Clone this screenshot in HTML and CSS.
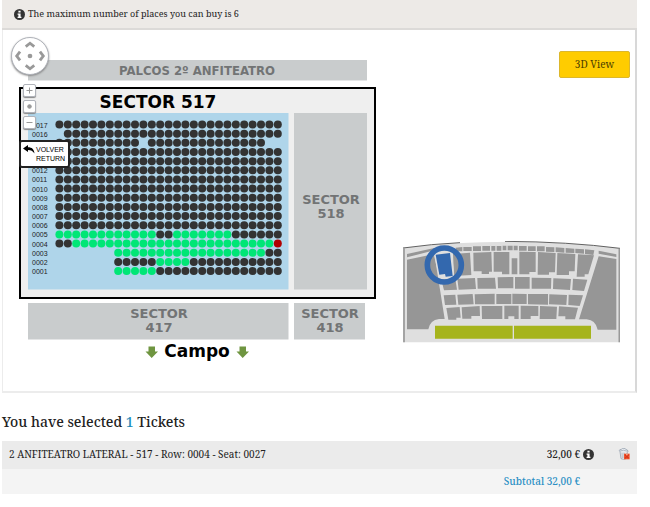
FILE: index.html
```html
<!DOCTYPE html>
<html lang="en">
<head>
<meta charset="utf-8">
<title>Seat selection</title>
<link rel="stylesheet" href="styles.css">
</head>
<body>
<svg class="defs" aria-hidden="true">
  <symbol id="info" viewBox="0 0 20 20">
    <circle cx="10" cy="10" r="10" fill="#333"/>
    <path d="M8 3h4v3.500H8zM6.500 8H12v6h1.500v2.500h-7V14H8v-3.500H6.500z" fill="#fff"/>
  </symbol>
</svg>
<main class="page">
  <p class="notice"><svg class="info-icon"><use href="#info"/></svg>The maximum number of places you can buy is 6</p>

  <section class="panel" aria-label="Seat map">
    <div class="map">
      <svg class="map-drawing" viewBox="3 30 375 361">
        <rect class="block" x="28" y="60" width="339" height="20.500"/>
        <text class="stand-name" x="197" y="75">PALCOS 2º ANFITEATRO</text>
        <rect class="sector" x="20" y="88" width="355" height="210"/>
        <text class="sector-name" x="158" y="108">SECTOR 517</text>
        <rect class="seating" x="28" y="113" width="260.500" height="176.500"/>
        <rect class="block" x="294" y="113" width="73" height="176.500"/>
        <text class="block-name" y="204"><tspan x="331">SECTOR</tspan><tspan x="331" dy="14">518</tspan></text>
        <rect class="block" x="28" y="303" width="260.500" height="36.500"/>
        <text class="block-name" y="318"><tspan x="159">SECTOR</tspan><tspan x="159" dy="14">417</tspan></text>
        <rect class="block" x="294" y="303" width="71" height="36.500"/>
        <text class="block-name" y="318"><tspan x="330">SECTOR</tspan><tspan x="330" dy="14">418</tspan></text>
        <text class="sector-name" x="197" y="357">Campo</text>
        <path class="arrow" d="M148.500 346.500h6.500v5h3l-6.300 6.500-6.200-6.500h3zM239.500 346.500h6.500v5h3l-6.300 6.500-6.200-6.500h3z"/>
        <g id="seats"></g>
      </svg>
      <div class="pan">
        <svg class="pan-face" viewBox="0 0 38 38" aria-hidden="true">
          <path d="M14.500 9l4.500-3.500L23.500 9M14.500 29l4.500 3.500 4.500-3.500M8.500 14.500L5 19l3.500 4.500M29.500 14.500L33 19l-3.500 4.500" fill="none" stroke="#999" stroke-width="3"/>
          <circle cx="19" cy="19" r="2.500" fill="#999"/>
        </svg>
      </div>
      <div class="zoom">
        <button class="zoom-button" aria-label="Zoom in"><svg viewBox="0 0 11 11"><path d="M5.500 2.500v6M2.500 5.500h6"/></svg></button>
        <button class="zoom-button" aria-label="Reset zoom"><svg viewBox="0 0 11 11"><circle cx="5.500" cy="5.500" r="1.800"/></svg></button>
        <button class="zoom-button" aria-label="Zoom out"><svg viewBox="0 0 11 11"><path d="M2.500 5.500h6"/></svg></button>
      </div>
      <button class="return">
        <svg class="return-icon" viewBox="0 0 12 10"><path d="M0 3.500L5 0v2.200c4 0 6 2 6.500 6.300C9.800 6 8 5 5 5v2z"/></svg>
        <span>VOLVER<br>RETURN</span>
      </button>
    </div>

    <div class="side">
      <button class="view-button">3D View</button>
      <svg class="overview" viewBox="24 18 651 306" role="img" aria-label="Stadium overview">
        <path d="M24 38Q180 20 350 20T675 40V322H24z" fill="#dfdfdf"/>
        <path d="M24 39Q110 27 195 23M330 19Q520 20 675 40" fill="none" stroke="#444" stroke-width="2.500"/>
        <path d="M27 40V322M673 41V322" fill="none" stroke="#999" stroke-width="5"/>
        <g fill="#969696">
          <path d="M36 57L118 39V46L36 67zM36 74L118 57 149 252H132Q105 255 100 283H36z"/>
          <path d="M611 47L664 58V66L611 56zM611 64L664 72V284H608Q602 255 575 253H552z"/>
          <path d="M182 38l20-2v13h-18zM205 36h25v12h-25zM234 34h24v14h-24zM262 33h23v14h-23zM289 33h12v14h-12zM305 33h14v14h-14zM323 32h11v14h-11zM338 32h15v14h-15zM356 32h12v14h-12zM372 33h23v14h-23zM399 34h23v14h-23zM426 34h23v15h-23zM453 36l25 1v14l-25-1zM482 37l26 2v14l-26-2zM512 39l26 2v13l-26-1zM541 41l26 2v13l-26-2zM570 43l28 3-3 14-25-3z"/>
          <path d="M174 57l51-4 4 67-52 3zM235 53l54-2 2 59h-9v7h-22v-8h-24zM296 51h47v67h-22v-8h-25zM350 70h17v48h-17zM373 50l49 1v60h-19v7h-30zM429 51l53 3-2 58h-18v7h-34zM487 54l54 3-2 52h-17v11h-37zM549 58l48 3-17 57h-11v7h-24z"/>
          <path d="M139 134l42-3 5 33-39 2zM187 131l53-2 3 33-52 2zM247 129l53-1 3 33h-55zM308 127l47-1v34h-46zM360 126h44v35h-44zM410 128l59 1-1 32h-58zM475 130l53 2-3 33-51-3zM534 131l43 3-10 34-35-3z"/>
          <path d="M146 181l35-2 3 30-34 1zM187 179l46-2 3 31-46 1zM239 178l60-2v32h-59zM304 177h45v30h-45zM352 176l43 1v30h-43zM399 177h60v32l-60-1zM463 178l53 2-2 30-52-2zM521 179l43 2-10 32-34-3z"/>
          <path d="M154 219l40-3 3 32h-13v6h-24zM200 217l54-4 1 30h-26v8h-27zM260 213h62v39h-61zM328 212h43v40h-13v-8h-18v8h-12zM377 212l53 1v30h-23v9h-30zM435 213l51 2-2 37h-50zM492 214l57 4-9 35h-29v-9h-21z"/>
        </g>
        <path d="M117 61l54-6 7 70-45 4z" fill="#dfdfdf"/>
        <path d="M122 59l43-5 8 69-21 2-2-8-17 2z" fill="#3368ae"/>
        <circle cx="148" cy="90" r="51" fill="none" stroke="#3368ae" stroke-width="17"/>
        <path d="M120 272H353V311H120zM357 272H588V311H357z" fill="#a6b41c"/>
      </svg>
    </div>
  </section>

  <h2 class="heading">You have selected <span class="count">1</span> Tickets</h2>
  <table class="tickets">
    <tbody>
      <tr class="ticket">
        <td class="name">2 ANFITEATRO LATERAL - 517 - Row: 0004 - Seat: 0027</td>
        <td class="price">32,00 €</td>
        <td class="actions">
          <div class="action-list">
            <button class="icon-button" aria-label="Price details"><svg class="info-icon"><use href="#info"/></svg></button>
            <button class="icon-button" aria-label="Remove ticket">
              <svg class="trash-icon" viewBox="0 0 36 36">
                <path d="M4 8Q4 4 10 4L14 1H21L23 4Q30 5 30 10L28 12 25 32Q17 36 9 32L6 11z" fill="#e6eaee" stroke="#8894a3" stroke-width="2"/>
                <path d="M5 9Q17 4 29 10M12 14l1 16M18 14v16" fill="none" stroke="#9aa5b2" stroke-width="2"/>
                <path d="M18 17H35V34H18z" fill="#f0582f"/>
                <path d="M21 20l11 11M32 20L21 31" stroke="#d8351c" stroke-width="4"/>
                <path d="M24 19h5v3h-5z" fill="#ffc2a0"/>
              </svg>
            </button>
          </div>
        </td>
      </tr>
      <tr class="subtotal">
        <td class="price" colspan="2">Subtotal 32,00 €</td>
        <td></td>
      </tr>
    </tbody>
  </table>
</main>
<script src="seats.js"></script>
</body>
</html>
```
FILE: styles.css
```css
body {
  margin: 0;
  background: #fff;
  color: #222;
  font: 10px/16px "Droid Serif", "Noto Serif", "Liberation Serif", serif;
}

button {
  margin: 0;
  padding: 0;
  color: inherit;
  font: inherit;
  cursor: pointer;
}

.defs {
  position: absolute;
  width: 0;
  height: 0;
}

.page {
  margin: 0 13px 0 2px;
}

.notice {
  display: flex;
  align-items: center;
  gap: 3px;
  margin: 0;
  padding: 6px 12px;
  border-bottom: 2px solid #dcdad8;
  background: #edeae7;
  font-size: 9px;
}

.info-icon {
  display: block;
  width: 11px;
  height: 11px;
}

.panel {
  display: flex;
  justify-content: space-between;
  border: solid #ececec;
  border-width: 0 2px 2px 1px;
  border-right-color: #d8d8d8;
}

.map {
  position: relative;
  flex: 0 0 375px;
}

.map-drawing {
  display: block;
  width: 100%;
}

.block {
  fill: #c9cccd;
}

.sector {
  fill: #efefef;
  stroke: #000;
  stroke-width: 2px;
}

.seating {
  fill: #afd5ea;
}

.stand-name,
.block-name,
.sector-name {
  font-weight: bold;
  text-anchor: middle;
}

.stand-name,
.block-name {
  fill: #727475;
  font-size: 13px;
}

.stand-name {
  font-family: "DejaVu Sans Condensed", "DejaVu Sans", sans-serif;
}

.block-name,
.sector-name {
  font-family: "DejaVu Sans", sans-serif;
}

.sector-name {
  fill: #000;
  font-size: 17px;
}

.arrow {
  fill: #6f9540;
}

.row-name {
  fill: #222;
  font-family: "Liberation Sans", sans-serif;
  font-size: 7px;
}

.taken {
  fill: #333;
}

.free {
  fill: #00e676;
}

.chosen {
  fill: #b00000;
}

.pan {
  position: absolute;
  top: 7px;
  left: 8px;
  width: 38px;
  height: 38px;
  box-sizing: border-box;
  border: 1px solid #b0b3ba;
  border-radius: 50%;
  background: #fff;
  box-shadow: 0 1px 2px #888;
}

.pan-face {
  display: block;
}

.zoom {
  position: absolute;
  top: 54px;
  left: 20px;
  display: grid;
  gap: 3px;
}

.zoom-button {
  width: 13px;
  height: 13px;
  box-sizing: border-box;
  border: 1px solid #b0b3ba;
  border-radius: 2px;
  background: #fff;
  box-shadow: 0 1px 1px #888;
  fill: #999;
  stroke: #999;
}

.zoom-button svg {
  display: block;
}

.return {
  position: absolute;
  top: 110px;
  left: 16px;
  display: flex;
  gap: 1px;
  padding: 3px 3px 3px 2px;
  border: 2px solid #222;
  border-radius: 3px;
  background: #fff;
  color: #000;
  font: 7px/9px "Liberation Sans", sans-serif;
  text-align: left;
}

.return-icon {
  width: 12px;
  height: 10px;
}

.side {
  display: flex;
  flex-direction: column;
  align-items: flex-end;
  justify-content: space-between;
  padding: 21px 5px 48px 0;
}

.view-button {
  width: 71px;
  height: 27px;
  padding-bottom: 2px;
  border: 1px solid #dcb72c;
  border-radius: 2px;
  background: #fc0;
  color: #4a3c00;
}

.overview {
  width: 217px;
  height: 102px;
  margin-right: 10px;
}

.heading {
  margin: 17px 0 7px;
  color: #222;
  font-size: 14px;
  font-weight: 500;
  line-height: 24px;
}

.count {
  color: #1f8bb8;
}

.tickets {
  width: 100%;
  border-collapse: collapse;
}

.tickets td {
  padding: 0 0 2px;
}

.tickets .name {
  padding-left: 7px;
}

.tickets .price {
  font-weight: 500;
  text-align: right;
}

.ticket {
  height: 28px;
  background: #ebebeb;
}

.subtotal {
  height: 25px;
  background: #f4f4f4;
  color: #2a8fc4;
}

.actions {
  width: 57px;
}

.action-list {
  display: flex;
  align-items: center;
  justify-content: space-between;
  padding: 0 7px 0 3px;
}

.icon-button {
  border: 0;
  background: none;
}

.trash-icon {
  display: block;
  width: 12px;
  height: 12px;
}
```
FILE: seats.js
```js
// One entry per row, back to front: x taken, o free, s chosen, dot no seat.
const full = "x".repeat(27);
const rows = [
  full,
  "." + "x".repeat(26),
  "x".repeat(10) + "." + "x".repeat(14) + "..",
  full, full, full, full, full, full, full, full, full,
  "o".repeat(12) + "xx" + "o".repeat(7) + "x".repeat(6),
  "xx" + "o".repeat(24) + "s",
  ".".repeat(7) + "o".repeat(18) + "xx",
  ".".repeat(7) + "xxxxx" + "oooo" + "x".repeat(11),
  ".".repeat(7) + "ooooo" + "x".repeat(15)
];
// Rows whose number lies under the return button.
const unnumbered = [15, 14, 13];
const kinds = { x: "taken", o: "free", s: "chosen" };
const ns = "http://www.w3.org/2000/svg";
const seats = document.getElementById("seats");

function add(tag, attributes) {
  const node = document.createElementNS(ns, tag);
  for (const key in attributes) node.setAttribute(key, attributes[key]);
  seats.appendChild(node);
  return node;
}

rows.forEach((row, r) => {
  const y = 124.5 + r * 9.16;
  const number = rows.length - r;
  if (!unnumbered.includes(number)) {
    add("text", { class: "row-name", x: 32, y: y + 3 }).textContent = String(number).padStart(4, "0");
  }
  [...row].forEach((seat, i) => {
    if (kinds[seat]) add("circle", { class: kinds[seat], cx: 59.4 + i * 8.4, cy: y, r: 4 });
  });
});
```
